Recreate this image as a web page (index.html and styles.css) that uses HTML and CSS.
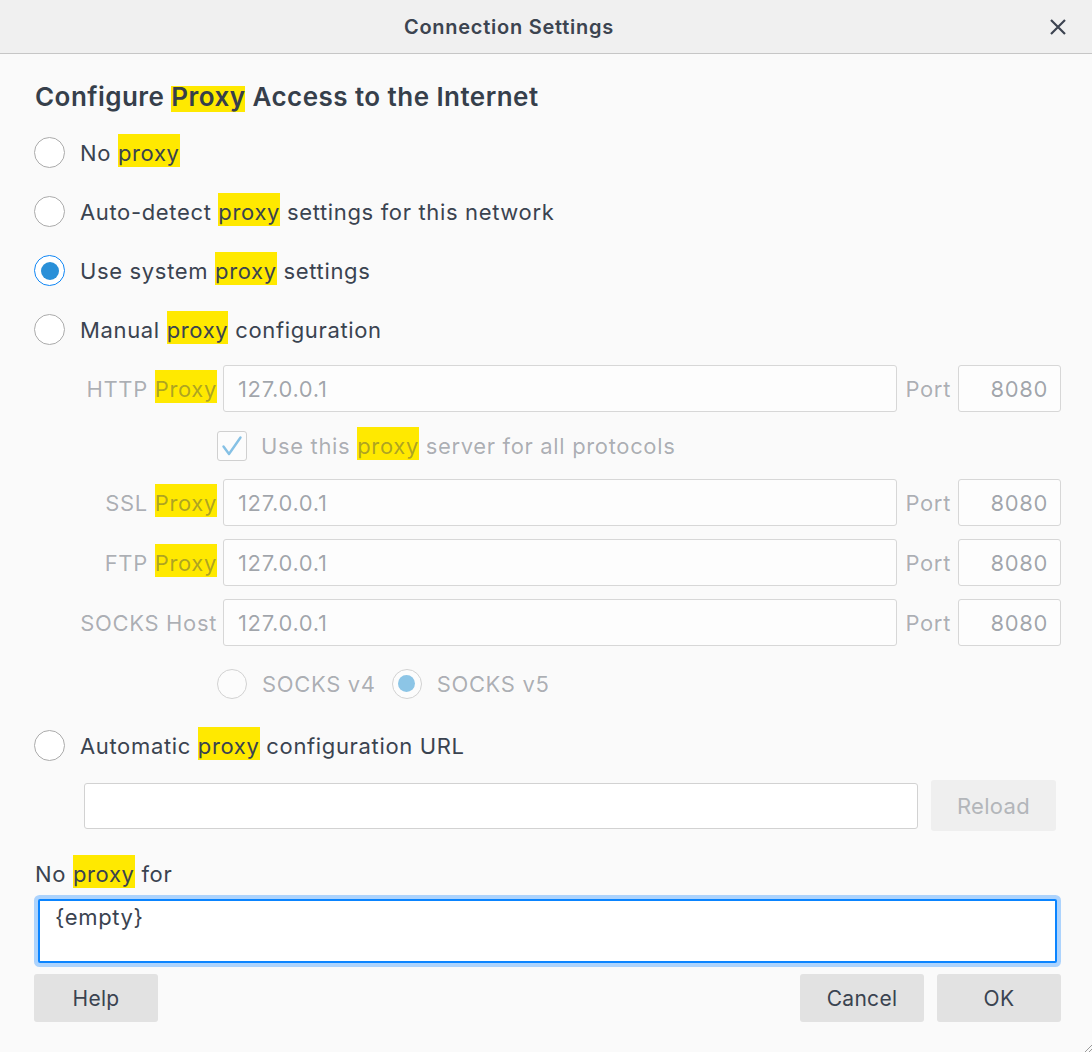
FILE: index.html
```html
<!DOCTYPE html>
<html lang="en">
<head>
<meta charset="utf-8">
<title>Connection Settings</title>
<link rel="stylesheet" href="styles.css">
</head>
<body>
<div class="dialog">
  <header class="titlebar">
    <span class="title">Connection Settings</span>
    <button class="close" aria-label="Close">
      <svg width="16" height="16" viewBox="0 0 16 16"><path d="M1 1 L15 15 M15 1 L1 15" stroke="#3d4451" stroke-width="2.2" fill="none"/></svg>
    </button>
  </header>
  <main class="content">
    <h1 class="heading">Configure <mark class="hl-h">Proxy</mark> Access to the Internet</h1>

    <div class="radio-row"><span class="radio"></span><span>No <mark>proxy</mark></span></div>
    <div class="radio-row"><span class="radio"></span><span>Auto-detect <mark>proxy</mark> settings for this network</span></div>
    <div class="radio-row"><span class="radio checked"></span><span>Use system <mark>proxy</mark> settings</span></div>
    <div class="radio-row"><span class="radio"></span><span>Manual <mark>proxy</mark> configuration</span></div>

    <div class="manual-grid disabled">
      <span class="lbl">HTTP <mark>Proxy</mark></span>
      <div class="field">127.0.0.1</div>
      <span class="port-lbl">Port</span>
      <div class="field port">8080</div>

      <div class="check-row">
        <span class="checkbox"><svg width="30" height="30" viewBox="0 0 30 30"><polyline points="6.5,15.5 12,23 23.5,6.5" fill="none" stroke="#86c1e5" stroke-width="2.4" stroke-linecap="round" stroke-linejoin="round"/></svg></span>
        <span>Use this <mark>proxy</mark> server for all protocols</span>
      </div>

      <span class="lbl">SSL <mark>Proxy</mark></span>
      <div class="field">127.0.0.1</div>
      <span class="port-lbl">Port</span>
      <div class="field port">8080</div>

      <span class="lbl">FTP <mark>Proxy</mark></span>
      <div class="field">127.0.0.1</div>
      <span class="port-lbl">Port</span>
      <div class="field port">8080</div>

      <span class="lbl">SOCKS Host</span>
      <div class="field">127.0.0.1</div>
      <span class="port-lbl">Port</span>
      <div class="field port">8080</div>

      <div class="socks-row">
        <span class="radio dis"></span><span class="socks-lbl">SOCKS v4</span>
        <span class="radio dis checked"></span><span>SOCKS v5</span>
      </div>
    </div>

    <div class="radio-row auto"><span class="radio"></span><span>Automatic <mark>proxy</mark> configuration URL</span></div>

    <div class="url-row">
      <div class="field url"></div>
      <button class="btn reload">Reload</button>
    </div>

    <div class="noproxy-lbl">No <mark>proxy</mark> for</div>
    <div class="textarea">{empty}</div>

    <div class="btn-row">
      <button class="btn">Help</button>
      <span class="spacer"></span>
      <button class="btn">Cancel</button>
      <button class="btn">OK</button>
    </div>
  </main>
  <svg class="grip" width="8" height="8" viewBox="0 0 8 8"><path d="M8 1 L1 8 M8 5 L5 8" stroke="#9a9a9a" stroke-width="1"/></svg>
</div>
</body>
</html>
```
FILE: styles.css
```css
* { box-sizing: border-box; }

html, body {
  margin: 0;
  background: #fafafa;
}

body {
  font-family: Inter, "Noto Sans", "DejaVu Sans", sans-serif;
  color: #3a4350;
  font-size: 22px;
  letter-spacing: 0.65px;
}

.dialog {
  position: relative;
  height: 1052px;
}

mark {
  background: #ffe900;
  color: inherit;
  padding: 6px 0 1px;
}

.titlebar {
  height: 54px;
  background: #f0f0f0;
  border-bottom: 1px solid #c6c6c6;
  display: flex;
  align-items: center;
}

.title {
  margin-left: auto;
  margin-right: auto;
  padding-right: 32px;
  font-size: 20px;
  font-weight: 600;
  letter-spacing: 0.75px;
  color: #3c4450;
}

.close {
  margin-right: 26px;
  width: 16px;
  height: 16px;
  padding: 0;
  border: 0;
  background: transparent;
  display: flex;
}

.content {
  padding: 0 31px 0 34px;
}

.heading {
  margin: 26px 0 9px;
  height: 34px;
  line-height: 34px;
  font-size: 26px;
  font-weight: 600;
  letter-spacing: 0.45px;
  color: #363f4b;
  padding-left: 1px;
}

.heading .hl-h {
  padding: 0;
  background: linear-gradient(to bottom, transparent 5px, #ffe900 5px);
}

.radio-row {
  height: 59px;
  display: flex;
  align-items: center;
  gap: 15px;
}

.radio {
  flex: none;
  width: 31px;
  height: 31px;
  border-radius: 50%;
  border: 1px solid #ababab;
  background: #fff;
  display: grid;
  place-items: center;
}

.radio.checked {
  border-color: #0f86f5;
}

.radio.checked::after {
  content: "";
  width: 18px;
  height: 18px;
  border-radius: 50%;
  background: #2a90d8;
}

.radio.dis {
  border-color: #d2d2d2;
  background: #fcfcfc;
}

.radio.dis.checked::after {
  width: 17px;
  height: 17px;
  background: #8cc5e6;
}

.manual-grid {
  margin-top: 6px;
  display: grid;
  grid-template-columns: 183px 1fr auto 103px;
  grid-template-rows: 47px 41px 47px 47px 47px 49px;
  column-gap: 6px;
  row-gap: 13px;
  align-items: center;
}

.disabled {
  color: rgba(58, 67, 80, 0.42);
}

.lbl {
  text-align: right;
  white-space: nowrap;
}

.port-lbl {
  padding: 0 1px 0 2px;
}

.field {
  height: 47px;
  border: 1px solid #d7d7d7;
  border-radius: 3px;
  background: #fdfdfd;
  padding: 0 14px;
  display: flex;
  align-items: center;
  color: rgba(58, 67, 80, 0.47);
}

.field.port {
  justify-content: flex-end;
  padding-right: 12px;
}

.check-row {
  grid-column: 2 / -1;
  margin-left: -6px;
  display: flex;
  align-items: center;
  gap: 14px;
}

.checkbox {
  width: 30px;
  height: 30px;
  border: 1px solid #d0d0d0;
  border-radius: 3px;
  background: #fcfcfc;
  display: flex;
}

.checkbox svg {
  margin: -1px;
}

.socks-row {
  grid-column: 2 / -1;
  margin-left: -6px;
  display: flex;
  align-items: center;
  gap: 15px;
}

.socks-row .radio {
  width: 30px;
  height: 30px;
}

.socks-lbl {
  margin-right: 1px;
}

.radio-row.auto {
  margin-top: 8px;
}

.url-row {
  margin-top: 5px;
  height: 51px;
  padding: 0 5px 0 50px;
  display: flex;
  align-items: center;
  gap: 13px;
}

.field.url {
  flex: 1;
  height: 46px;
  background: #fff;
  border-color: #d2d2d2;
}

.btn {
  font-family: inherit;
  font-size: 21px;
  letter-spacing: 0.3px;
  width: 124px;
  height: 48px;
  border: 0;
  border-radius: 3px;
  background: #e2e2e2;
  color: #3a4350;
  padding: 0;
}

.btn.reload {
  width: 125px;
  height: 51px;
  background: #efefef;
  color: #b3b6ba;
  font-size: 22px;
}

.noproxy-lbl {
  margin-top: 28px;
  height: 30px;
  line-height: 30px;
  padding-left: 1px;
}

.textarea {
  margin: 10px 4px 0 4px;
  height: 64px;
  border: 2px solid #0a84ff;
  border-radius: 2px;
  box-shadow: 0 0 0 4px #acd3fd;
  background: #fff;
  padding: 2px 15px;
  line-height: 28px;
  font-size: 22px;
}

.btn-row {
  margin-top: 11px;
  display: flex;
  gap: 13px;
}

.spacer {
  flex: 1;
}

.grip {
  position: absolute;
  right: 0;
  bottom: 0;
}
```
